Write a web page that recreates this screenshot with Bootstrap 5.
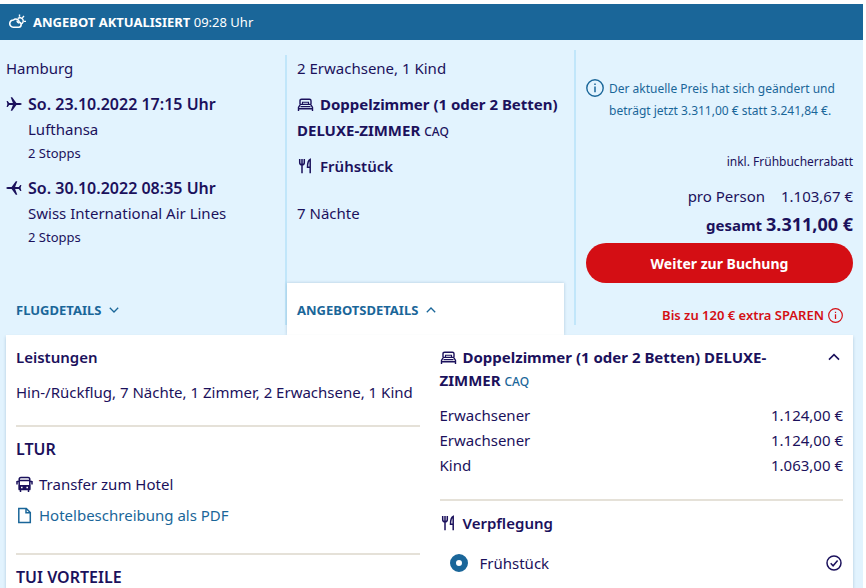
<!DOCTYPE html>
<html lang="de">
<head>
<meta charset="utf-8">
<meta name="viewport" content="width=device-width, initial-scale=1">
<title>Angebot</title>
<link href="https://cdn.jsdelivr.net/npm/bootstrap@5.3.0/dist/css/bootstrap.min.css" rel="stylesheet">
<style>
:root { --navy: #1b115c; --blue: #1a6699; --red: #d40e14; --sky: #e2f3fe; --line: #c1e6fa; --sand: #e5e1d8; }
body { font-family: "Noto Sans", "Open Sans", sans-serif; font-size: 15px; line-height: 24px; color: var(--navy); background: #fff; }
svg { fill: none; stroke: currentColor; flex: none; }
h2 { font-size: 15px; line-height: 24px; font-weight: 600; margin: 0; }
strong { font-weight: 700; }
.semi { font-weight: 600; }
.offer { background: var(--sky); margin: 4px 3px 0 0; }
.status-bar { background: var(--blue); color: #fff; height: 36px; padding: 0 9px; gap: 7px; font-size: 13px; }
.overview { display: grid; grid-template-columns: 287fr 289fr 287fr; padding-top: 10px; }
.flight-cell { margin-top: 5px; border-right: 2px solid var(--line); }
.room-cell { border-right: 2px solid var(--line); }
.flight-text { padding: 1px 6px 0; }
.room-text { padding: 6px 0 0 10px; }
.leg { display: grid; grid-template-columns: 16px 1fr; column-gap: 6px; margin-top: 12px; line-height: 25px; }
.leg > svg { margin-top: 4px; }
.departure { font-size: 16px; font-weight: 600; }
.fine { font-size: 13px; line-height: 22px; }
.code { font-size: 12px; line-height: 12px; font-weight: 500; }
.blue { color: var(--blue); }
.room-name { line-height: 26px; margin-top: 11px; }
.meal { line-height: 26px; margin-top: 10px; }
.nights { margin-top: 22px; }
.inline-icon { display: inline-block; vertical-align: -2px; margin-right: 6px; }
.tab { display: flex; align-items: center; gap: 8px; height: 52px; border: 0; background: none; color: var(--blue); font-size: 13px; font-weight: 700; padding: 2px 10px 0; text-align: left; margin-bottom: -10px; }
.flight-cell .tab { padding-left: 16px; }
.room-cell .tab { background: #fff; margin-right: 10px; box-shadow: 0 0 3px rgba(27, 80, 120, .25); }
.price-cell { padding: 28px 10px 0; }
.notice { color: var(--blue); font-size: 12px; line-height: 22px; gap: 5px; }
.notice svg { margin-top: 1px; }
.rabatt { font-size: 12px; line-height: 22px; margin-top: 29px; }
.person { margin-top: 11px; gap: 16px; }
.total { line-height: 28px; margin-top: 2px; }
.total-price { font-size: 18px; }
.book { background: var(--red); color: #fff; height: 40px; border-radius: 20px; font-size: 14px; font-weight: 700; margin-top: 4px; padding: 0; }
.book:hover { background: #b00b10; color: #fff; }
.saving { color: var(--red); font-size: 13px; font-weight: 600; line-height: 20px; gap: 4px; margin-top: 22px; padding-right: 10px; }
.details { position: relative; display: grid; grid-template-columns: 1fr 1fr; background: #fff; margin: 10px 10px 0 6px; padding: 10px 10px 0; column-gap: 20px; box-shadow: 0 2px 3px rgba(27, 80, 120, .25); }
.rule { border: 0; border-top: 2px solid var(--sand); opacity: 1; margin: 0; }
.rule + h2 { line-height: 22px; margin-top: 11px; }
.brand-title { font-size: 16px; }
.services { margin: 11px 0 21px; }
.extra { gap: 6px; margin-top: 12px; }
.extra + .extra { margin-top: 7px; }
.extra + .rule { margin-top: 26px; }
.room-head { line-height: 23px; font-weight: 700; padding: 1px 36px 0 0; }
.bare { display: flex; align-items: center; height: 24px; border: 0; background: none; padding: 0 3px; color: inherit; }
.prices { width: 100%; margin: 11px 0 21px; line-height: 25px; }
.prices th, .prices td { padding: 0; font-weight: 400; }
.choice { margin-top: 17px; padding-left: 10px; gap: 12px; }
.meal-radio { appearance: none; width: 18px; height: 18px; margin: 0; border-radius: 50%; border: 6px solid var(--blue); background: #fff; }
</style>
<script src="https://cdn.jsdelivr.net/npm/bootstrap@5.3.0/dist/js/bootstrap.bundle.min.js"></script>
</head>
<body>
<svg class="d-none">
  <symbol id="bed" viewBox="0 0 17 14"><path d="M3 6V2.800Q3 1.200 4.600 1.200h7.800Q14 1.200 14 2.800V6M1.500 13V9.500L3.300 6.400h10.400l1.800 3.100V13M1.500 10.800h14" stroke-width="1.400"/><path d="M5.500 6V4.200h6V6M3.500 8.600h10" stroke-width="1.100"/></symbol>
  <symbol id="cutlery" viewBox="0 0 17 16"><path d="M2.700 1v3.400q0 2.400 2.300 2.400t2.300-2.400V1M5 1v14.200" stroke-width="1.500"/><path d="M13.200 15.200V1.500q-2.700 1.300-2.700 7.800h2.700" stroke-width="1.500"/></symbol>
  <symbol id="plane" viewBox="0 0 16 16"><path d="M15.800 8q-.4-1-1.800-1h-3.600L6.200 1.200H4.700L6.900 7H3.200L1.700 5H.6l.8 3-.8 3h1.100l1.500-2h3.700l-2.200 5.800h1.500L10.400 9H14q1.400 0 1.800-1z" fill="currentColor" stroke="none"/></symbol>
  <symbol id="info" viewBox="0 0 18 18"><circle cx="9" cy="9" r="8.200" stroke-width="1.400"/><path d="M9 7.600v5.600M9 4.400v1.700" stroke-width="1.500"/></symbol>
  <symbol id="down" viewBox="0 0 10 6"><path d="M.8.800 5 5 9.200.800" stroke-width="1.300"/></symbol>
  <symbol id="up" viewBox="0 0 10 6"><path d="M.8 5.200 5 1l4.200 4.200" stroke-width="1.300"/></symbol>
</svg>
<main class="offer">
  <header class="status-bar d-flex align-items-center">
    <svg width="17" height="17" viewBox="0 0 17 17"><path d="M4.200 13.200h5.600a2.600 2.600 0 0 0 .4-5.100A3.400 3.400 0 0 0 4.500 6a3.600 3.600 0 0 0-.3 7.200z" stroke-width="1.600"/><path d="M8.800 4.600a3.200 3.200 0 1 1 3 5.400M8 6.500q.2 2.500 2.500 2.500" stroke-width="1.400"/><path d="M10.500.500v2.300M15 2l-1.700 1.900M14.800 7.400H17" stroke-width="1.400"/></svg>
    <div><strong>ANGEBOT AKTUALISIERT</strong> <span>09:28 Uhr</span></div>
  </header>

  <div class="overview">
    <section class="flight-cell d-flex flex-column justify-content-between">
      <div class="flight-text">
        <div>Hamburg</div>
        <div class="leg">
          <svg width="16" height="16"><use href="#plane"/></svg>
          <div><div class="departure">So. 23.10.2022 17:15 Uhr</div><div>Lufthansa</div><div class="fine">2 Stopps</div></div>
        </div>
        <div class="leg">
          <svg width="16" height="16" viewBox="0 0 16 16"><g transform="matrix(-1 0 0 1 16 0)"><use href="#plane"/></g></svg>
          <div><div class="departure">So. 30.10.2022 08:35 Uhr</div><div>Swiss International Air Lines</div><div class="fine">2 Stopps</div></div>
        </div>
      </div>
      <button class="tab" type="button">FLUGDETAILS <svg width="10" height="6"><use href="#down"/></svg></button>
    </section>

    <section class="room-cell d-flex flex-column justify-content-between">
      <div class="room-text">
        <div>2 Erwachsene, 1 Kind</div>
        <div class="room-name"><svg class="inline-icon" width="17" height="14"><use href="#bed"/></svg><strong>Doppelzimmer (1 oder 2 Betten) DELUXE-ZIMMER</strong> <span class="code">CAQ</span></div>
        <div class="meal"><svg class="inline-icon" width="17" height="16"><use href="#cutlery"/></svg><span class="semi">Frühstück</span></div>
        <div class="nights">7 Nächte</div>
      </div>
      <button class="tab" type="button">ANGEBOTSDETAILS <svg width="10" height="6"><use href="#up"/></svg></button>
    </section>

    <section class="price-cell">
      <div class="notice d-flex"><svg width="18" height="18"><use href="#info"/></svg><div>Der aktuelle Preis hat sich geändert und beträgt jetzt 3.311,00 € statt 3.241,84 €.</div></div>
      <div class="rabatt text-end">inkl. Frühbucherrabatt</div>
      <div class="person d-flex justify-content-end"><span>pro Person</span><span>1.103,67 €</span></div>
      <div class="total text-end"><strong>gesamt <span class="total-price">3.311,00 €</span></strong></div>
      <button class="btn book w-100" type="button">Weiter zur Buchung</button>
      <div class="saving d-flex justify-content-end align-items-center">Bis zu 120 € extra SPAREN <svg width="15" height="15"><use href="#info"/></svg></div>
    </section>
  </div>

  <div class="details">
    <section>
      <h2>Leistungen</h2>
      <div class="services">Hin-/Rückflug, 7 Nächte, 1 Zimmer, 2 Erwachsene, 1 Kind</div>
      <hr class="rule">
      <h2 class="brand-title">LTUR</h2>
      <div class="extra d-flex align-items-center">
        <svg width="17" height="17" viewBox="0 0 17 17" stroke-width="1.500"><path d="M3.200 13V3.500Q3.200 1.500 5 1.500h7q1.800 0 1.800 2V13zM3 4.500h11M1 5v3.500M16 5v3.500M4.500 13v3M12.500 13v3M1 5.500h2M14 5.500h2"/><path d="M3.500 9.800h10v3.700h-10z" fill="currentColor"/><path d="M5 11.500h1.600M10.400 11.500H12" stroke="#fff"/></svg>
        <span>Transfer zum Hotel</span>
      </div>
      <a class="extra d-flex align-items-center text-decoration-none blue" href="#pdf">
        <svg width="17" height="17" viewBox="0 0 17 17" stroke-width="1.500"><path d="M2.800 1.500h7.500l4 4v10H2.800zM10 1.500v4.300h4.300"/></svg>
        <span>Hotelbeschreibung als PDF</span>
      </a>
      <hr class="rule">
      <h2 class="brand-title">TUI VORTEILE</h2>
    </section>
    <section>
      <div class="d-flex justify-content-between align-items-start">
        <h2 class="room-head"><svg class="inline-icon" width="17" height="14"><use href="#bed"/></svg>Doppelzimmer (1 oder 2 Betten) DELUXE-ZIMMER <span class="code blue">CAQ</span></h2>
        <button class="bare" type="button" aria-label="Zimmer einklappen"><svg width="12" height="8"><use href="#up"/></svg></button>
      </div>
      <table class="prices">
        <tr><th scope="row">Erwachsener</th><td class="text-end">1.124,00 €</td></tr>
        <tr><th scope="row">Erwachsener</th><td class="text-end">1.124,00 €</td></tr>
        <tr><th scope="row">Kind</th><td class="text-end">1.063,00 €</td></tr>
      </table>
      <hr class="rule">
      <h2><svg class="inline-icon" width="17" height="16"><use href="#cutlery"/></svg>Verpflegung</h2>
      <div class="choice d-flex align-items-center">
        <input class="meal-radio" type="radio" name="meal" id="breakfast" checked>
        <label class="flex-grow-1" for="breakfast">Frühstück</label>
        <svg width="18" height="18" viewBox="0 0 18 18" stroke-width="1.500"><circle cx="9" cy="9" r="7"/><path d="m5.700 9.200 2.400 2.600 4.500-5.400"/></svg>
      </div>
    </section>
  </div>
</main>
</body>
</html>
